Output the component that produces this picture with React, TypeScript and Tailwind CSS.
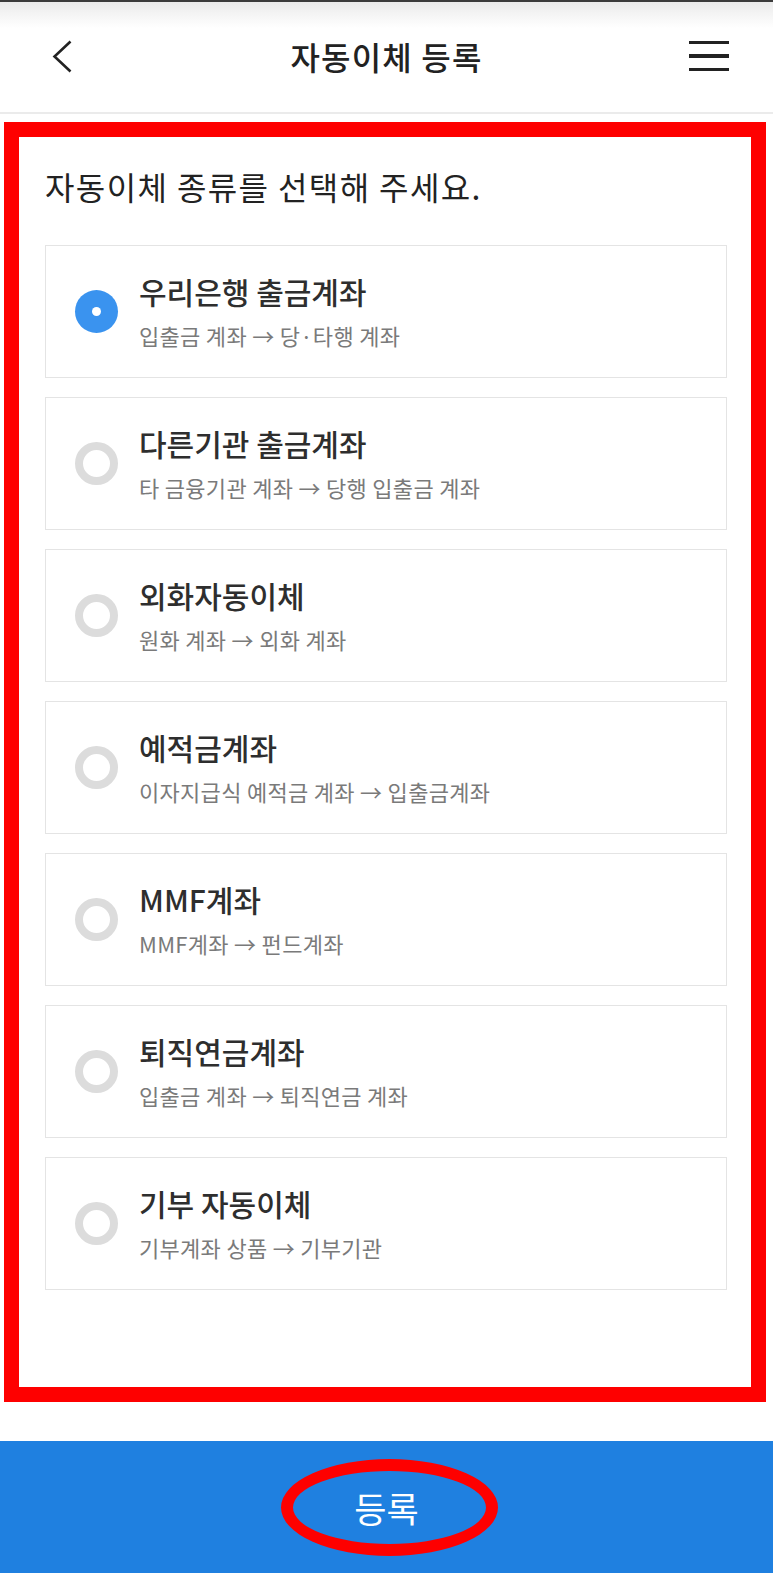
import React from "react";

const items = [
  { title: "우리은행 출금계좌", sub: "입출금 계좌 → 당·타행 계좌", selected: true },
  { title: "다른기관 출금계좌", sub: "타 금융기관 계좌 → 당행 입출금 계좌" },
  { title: "외화자동이체", sub: "원화 계좌 → 외화 계좌" },
  { title: "예적금계좌", sub: "이자지급식 예적금 계좌 → 입출금계좌" },
  { title: "MMF계좌", sub: "MMF계좌 → 펀드계좌" },
  { title: "퇴직연금계좌", sub: "입출금 계좌 → 퇴직연금 계좌" },
  { title: "기부 자동이체", sub: "기부계좌 상품 → 기부기관" },
];

const font = "font-['Noto_Sans_CJK_KR','Noto_Sans',sans-serif]";

export default function App() {
  return (
    <div className={`w-[773px] h-[1573px] bg-white flex flex-col ${font}`}>
      <header className="h-[114px] border-b-2 border-[#ebebeb] bg-[linear-gradient(to_bottom,#3c3c3c_0px,#3c3c3c_2px,#ebebeb_2px,#ffffff_28px)] grid grid-cols-[1fr_auto_1fr] items-center">
        <div className="pl-[52px] flex items-center">
          <svg width="20" height="33" viewBox="0 0 20 33" fill="none">
            <path d="M18.5 1.5 L2.5 16.5 L18.5 31.5" stroke="#222" strokeWidth="2.6" strokeLinejoin="miter" />
          </svg>
        </div>
        <h1 className="text-[32px] font-medium text-[#222] leading-none tracking-[1.2px]">자동이체 등록</h1>
        <div className="pr-[44px] flex justify-end">
          <div className="w-[40px] flex flex-col gap-[10px]">
            <span className="block h-[3.5px] bg-[#222]" />
            <span className="block h-[3.5px] bg-[#222]" />
            <span className="block h-[3.5px] bg-[#222]" />
          </div>
        </div>
      </header>

      <main className="mt-[8px] ml-[4px] mr-[7px] border-[15px] border-[#fe0000] pt-[28px] pb-[97px] pl-[26px] pr-[24px]">
        <h2 className="text-[32px] leading-[42px] text-[#222] tracking-[1.4px]">자동이체 종류를 선택해 주세요.</h2>
        <ul className="mt-[38px] flex flex-col gap-[19px]">
          {items.map((it) => (
            <li
              key={it.title}
              className="h-[133px] border border-[#e4e4e4] flex items-center pl-[29px]"
            >
              {it.selected ? (
                <span className="w-[43px] h-[43px] rounded-full bg-[#3a93ef] flex items-center justify-center shrink-0">
                  <span className="w-[9px] h-[9px] rounded-full bg-white" />
                </span>
              ) : (
                <span className="w-[43px] h-[43px] rounded-full border-[8px] border-[#dcdcdc] shrink-0" />
              )}
              <div className="ml-[21px] flex flex-col">
                <span className="text-[30px] leading-[36px] font-medium text-[#2e2e2e] tracking-[0px]">
                  {it.title}
                </span>
                <span className="mt-[12px] text-[22px] leading-[29px] text-[#7a7a7a] tracking-[0.3px]">
                  {it.sub}
                </span>
              </div>
            </li>
          ))}
        </ul>
      </main>

      <div className="mt-auto h-[132px] bg-[#1f80e0] relative flex items-center justify-center">
        <span className="text-[35px] text-white leading-none">등록</span>
        <div className="absolute left-[281px] top-[18px] w-[217px] h-[97px] rounded-[50%] border-[12px] border-[#fe0000]" />
      </div>
    </div>
  );
}
